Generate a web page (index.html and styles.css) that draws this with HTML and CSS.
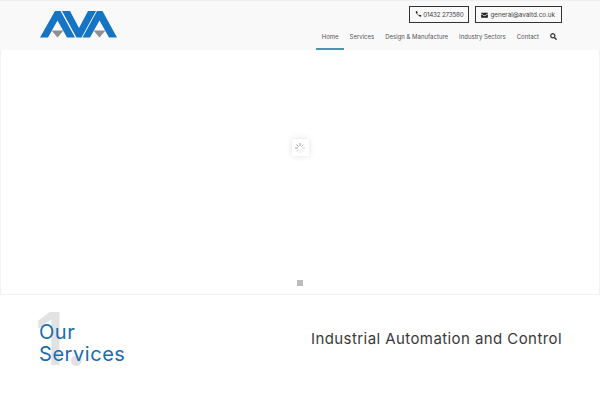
FILE: index.html
```html
<!DOCTYPE html>
<html lang="en">
<head>
<meta charset="utf-8">
<title>AVA</title>
<link rel="stylesheet" href="styles.css">
</head>
<body>
<header class="header">
  <a class="logo" href="#">
    <svg width="77" height="27" viewBox="0 0 77 27">
      <path fill="#1674c4" d="M0 26.500 15 0h5.500l14.500 26.500h-8L17.500 9.500 8 26.500Z"/>
      <path fill="#1674c4" d="M22 0h8l9 17L48 0h8L41.500 26.500h-5Z"/>
      <path fill="#1674c4" d="M42.500 26.500 57 0h5.500l14.500 26.500h-8L59.500 9.500 50 26.500Z"/>
      <path fill="#8f8f8f" d="M11.500 19.500h12l-6 7Z"/>
      <path fill="#8f8f8f" d="M53.500 19.500h12l-6 7Z"/>
    </svg>
  </a>
  <div class="header-right">
    <div class="contacts">
      <a class="contact contact-phone" href="#">
        <svg class="contact-icon" width="7" height="7" viewBox="0 0 10 10"><path fill="#222" d="M1 .5 3 .2l1 2.400-1.100 1c.6 1.200 1.500 2.100 2.700 2.700l1-1.100 2.400 1-.3 2.100C6.500 9 .8 4 1 .5Z"/></svg>
        01432 273580
      </a>
      <a class="contact" href="#">
        <svg class="contact-icon" width="7" height="6" viewBox="0 0 9 8"><path fill="#222" d="M0 1h9v1L4.500 4.600 0 2Zm0 2 4.500 2.600L9 3v4.500H0Z"/></svg>
        general@avaltd.co.uk
      </a>
    </div>
    <nav class="nav">
      <a class="nav-item active" href="#">Home</a>
      <a class="nav-item" href="#">Services</a>
      <a class="nav-item" href="#">Design &amp; Manufacture</a>
      <a class="nav-item" href="#">Industry Sectors</a>
      <a class="nav-item" href="#">Contact</a>
      <a class="nav-item search" href="#"><svg width="7" height="7" viewBox="0 0 7 7"><circle cx="2.800" cy="2.800" r="2.100" fill="none" stroke="#333" stroke-width="1.200"/><path d="M4.400 4.400 6.600 6.600" stroke="#333" stroke-width="1.400"/></svg></a>
    </nav>
  </div>
</header>
<section class="hero">
  <div class="spinner-box">
    <svg width="10" height="10" viewBox="0 0 10 10" stroke-linecap="round">
      <path stroke="#999" d="M5 .5v2"/><path stroke="#bbb" d="M8.200 1.800 6.800 3.200"/><path stroke="#ccc" d="M9.500 5h-2"/><path stroke="#ddd" d="M8.200 8.200 6.800 6.800"/><path stroke="#ddd" d="M5 9.500v-2"/><path stroke="#ccc" d="M1.800 8.200 3.200 6.800"/><path stroke="#999" d="M.5 5h2"/><path stroke="#888" d="M1.800 1.800 3.200 3.200"/>
    </svg>
  </div>
  <span class="slide-dot"></span>
</section>
<section class="intro">
  <div class="title-wrap">
    <span class="number">1.</span>
    <h2 class="title">Our<br>Services</h2>
  </div>
  <p class="tagline">Industrial Automation and Control</p>
</section>
</body>
</html>
```

FILE: styles.css
```css
* { box-sizing: border-box; }
html, body { margin: 0; padding: 0; background: #fff; }
body { font-family: "Inter", "Liberation Sans", sans-serif; color: #333; height: 400px; overflow: hidden; }
a { color: inherit; text-decoration: none; }

.header {
  height: 50px;
  background: #f9f9f9;
  border-top: 1px solid #f0f0f0;
  padding: 0 38px 0 40px;
  display: flex;
  justify-content: space-between;
}
.logo { display: block; margin-top: 10px; height: 27px; }
.header-right { display: flex; flex-direction: column; align-items: flex-end; }
.contacts { display: flex; gap: 6px; margin-top: 5px; }
.contact {
  height: 17px;
  border: 1px solid #333;
  padding: 0 6px 0 5px;
  display: flex;
  align-items: center;
  gap: 2px;
  font-size: 6.300px;
  color: #444;
  white-space: nowrap;
}
.contact-phone { letter-spacing: -.23px; padding-right: 5px; gap: 1px; }
.contact-icon { flex: none; }
.nav { display: flex; }
.nav-item {
  height: 27px;
  padding: 0 5.500px;
  display: flex;
  align-items: center;
  font-size: 6px;
  color: #555;
  white-space: nowrap;
}
.nav-item.active { box-shadow: inset 0 -2px 0 #4f93ad; }
.search { padding-right: 5px; }

.hero {
  height: 245px;
  border: 1px solid #f3f3f3;
  border-top: 0;
  display: flex;
  flex-direction: column;
  align-items: center;
}
.spinner-box {
  margin-top: 89px;
  width: 17px;
  height: 17px;
  background: #fff;
  box-shadow: 0 0 6px rgba(0,0,0,.12);
  display: flex;
  align-items: center;
  justify-content: center;
}
.slide-dot { margin-top: 124px; width: 6px; height: 6px; background: #bcbcbc; }

.intro {
  display: flex;
  justify-content: space-between;
  padding: 15px 38px 0 39px;
}
.title-wrap { position: relative; padding-top: 11px; }
.number {
  position: absolute;
  left: -4px;
  top: -11px;
  font-size: 73px;
  line-height: 80px;
  font-weight: 500;
  color: #e2e2e2;
}
.title {
  position: relative;
  margin: 0;
  font-size: 20px;
  line-height: 22px;
  font-weight: 400;
  color: #1b6cb0;
  letter-spacing: .55px;
}
.tagline {
  margin: 20px 0 0;
  font-size: 15px;
  line-height: 18px;
  letter-spacing: .42px;
  color: #3a3a3a;
}
```
